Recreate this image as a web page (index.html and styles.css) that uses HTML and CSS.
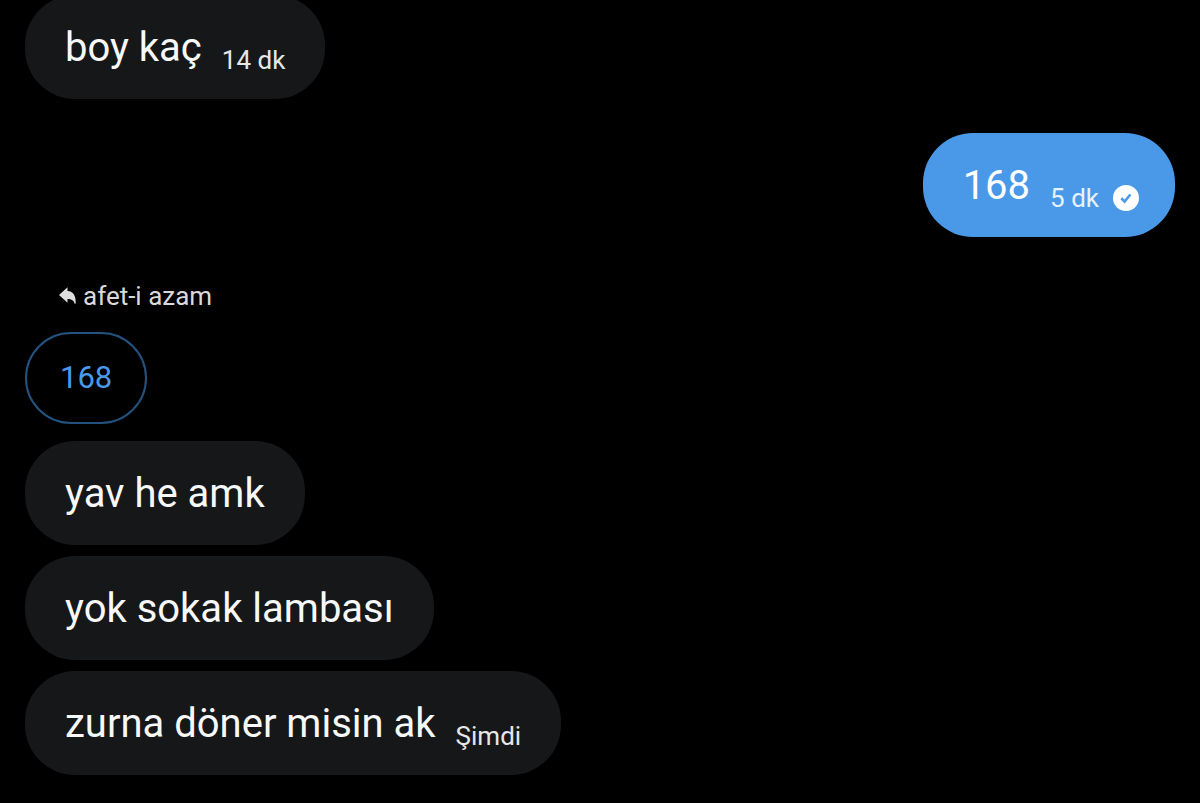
FILE: index.html
```html
<!DOCTYPE html>
<html lang="tr">
<head>
  <meta charset="UTF-8">
  <meta name="viewport" content="width=device-width, initial-scale=1.0">
  <title>afet-i azam</title>
  <link rel="stylesheet" href="styles.css">
</head>
<body>

  <main class="chat">
    <div class="message">
      <p class="text">boy kaç</p>
      <time class="time">14 dk</time>
    </div>

    <div class="message sent">
      <p class="text">168</p>
      <time class="time">5 dk</time>
      <svg class="check" viewBox="0 0 26 26" aria-hidden="true">
        <circle cx="13" cy="13" r="13" fill="#fff"/>
        <path d="M8.300 13.300l3.300 3.200 5.800-7" fill="none" stroke="#4a99e9" stroke-width="2.600"/>
      </svg>
    </div>

    <div class="reply">
      <div class="reply-to">
        <svg class="reply-icon" viewBox="0 0 18 18" aria-hidden="true">
          <path d="M8.500 0.300v3.700c5.800.3 8.600 4.500 8.200 12.800h-1c-.8-3.300-3-4.800-7.200-4.800v3.800L0 8z" fill="#dedede"/>
        </svg>
        <span>afet-i azam</span>
      </div>
      <p class="quote">168</p>
    </div>

    <div class="message">
      <p class="text">yav he amk</p>
    </div>

    <div class="message">
      <p class="text">yok sokak lambası</p>
    </div>

    <div class="message">
      <p class="text">zurna döner misin ak</p>
      <time class="time">Şimdi</time>
    </div>
  </main>

</body>
</html>
```

FILE: styles.css
```css
* {
  box-sizing: border-box;
}

body {
  margin: 0;
  background-color: #000;
  color: #f7f8f8;
  font-family: Roboto, "Liberation Sans", sans-serif;
}

p {
  margin: 0;
}

/* the thread is scrolled down to the last message */
.chat {
  display: flex;
  flex-direction: column;
  justify-content: flex-end;
  align-items: flex-start;
  gap: 11px;
  height: 100vh;
  padding: 0 25px 28px;
  overflow: hidden;
}

.message {
  display: flex;
  flex-shrink: 0;
  align-items: flex-end;
  padding: 26px 40px 24px;
  border-radius: 50px;
  background-color: #161719;
}

.text {
  font-size: 40px;
  line-height: 54px;
}

.time {
  margin-left: 20px;
  color: #e6e7e8;
  font-size: 26px;
  line-height: 30px;
}

.sent {
  align-self: flex-end;
  margin: 23px 0 22px;
  padding-right: 36px;
  background-color: #4a99e9;
  color: #fff;
}

.sent .time {
  color: #e8f2fc;
}

.check {
  width: 26px;
  height: 26px;
  margin: 0 0 2px 14px;
}

.reply {
  margin: 10px 0 6px;
}

.reply-to {
  display: flex;
  align-items: center;
  gap: 6px;
  margin-bottom: 20px;
  padding-left: 34px;
  color: #d9d9d9;
  font-size: 26px;
  line-height: 32px;
}

.reply-icon {
  width: 18px;
  height: 18px;
}

.quote {
  display: inline-block;
  padding: 24px 33px;
  border: 2px solid #24527f;
  border-radius: 46px;
  color: #4a99e9;
  font-size: 31px;
  line-height: 40px;
}
```
